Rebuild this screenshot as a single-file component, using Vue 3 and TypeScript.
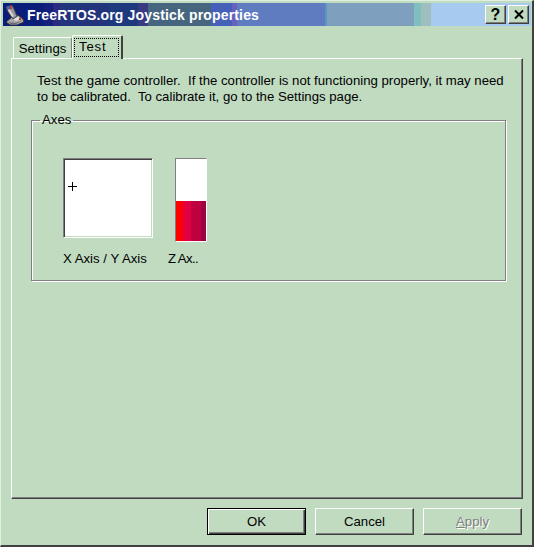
<script setup lang="ts">
interface Band {
  width: number
  color: string
}

const titleBands: Band[] = [
  { width: 41, color: '#0a1d78' },
  { width: 9, color: '#14207c' },
  { width: 7, color: '#2a2a80' },
  { width: 48, color: '#22347c' },
  { width: 30, color: '#1e3a7e' },
  { width: 10, color: '#3a3a82' },
  { width: 63, color: '#45667e' },
  { width: 21, color: '#4460b8' },
  { width: 5, color: '#6a60c0' },
  { width: 88, color: '#5f7cc0' },
  { width: 2, color: '#5a96c0' },
  { width: 87, color: '#7f9fbf' },
  { width: 7, color: '#7fbfbf' },
  { width: 10, color: '#9fbfbf' },
]

const zBands: Band[] = [
  { width: 7, color: '#ff0000' },
  { width: 8, color: '#df0040' },
  { width: 10, color: '#bf0040' },
  { width: 5, color: '#9f0040' },
]
</script>

<template>
  <div class="dialog">
    <header class="titlebar">
      <div class="bands">
        <span
          v-for="(band, i) in titleBands"
          :key="i"
          :style="{ width: band.width + 'px', background: band.color }"
        ></span>
      </div>
      <svg class="app-icon" width="22" height="22" viewBox="0 0 22 22">
        <path d="M3 18l6-5 6-2 5 4 1 3-7 3H7z" fill="#a8a8a8" stroke="#303038" stroke-width="1" />
        <path d="M10 15l5-2 3 2-5 2z" fill="#e0e0e0" />
        <path d="M5 18l7 1 7-2-6 3H8z" fill="#686870" />
        <path d="M3 3l6-2 2 4 3 7-4 3-5-7z" fill="#98989f" stroke="#404048" stroke-width="1" />
        <path d="M5 6l2 0 4 6-2 1z" fill="#d8d8d8" />
        <path d="M4 2h3v3H4z" fill="#4060c0" />
        <path d="M7 2h2v3H7z" fill="#c83838" />
        <path d="M16 14h2v2h-2z" fill="#c03030" />
      </svg>
      <span class="title">FreeRTOS.org Joystick properties</span>
      <div class="caption-buttons">
        <button class="caption-btn help">?</button>
        <button class="caption-btn close">
          <svg width="12" height="11" viewBox="0 0 12 11">
            <path d="M2 1.5l8 8M10 1.5l-8 8" stroke="#000" stroke-width="2" fill="none" />
          </svg>
        </button>
      </div>
    </header>

    <div class="content">
      <div class="tabs">
        <div class="tab">Settings</div>
        <div class="tab active"><span class="focus">Test</span></div>
      </div>

      <section class="panel">
        <p class="intro">
          Test the game controller.&nbsp; If the controller is not functioning properly, it may need<br />
          to be calibrated.&nbsp; To calibrate it, go to the Settings page.
        </p>

        <fieldset class="axes">
          <legend>Axes</legend>
          <div class="axis-row">
            <div class="axis xy">
              <div class="xy-box">
                <svg class="crosshair" width="9" height="9" viewBox="0 0 9 9">
                  <path d="M4.5 0v9M0 4.5h9" stroke="#000" stroke-width="1" />
                </svg>
              </div>
              <div class="axis-label">X Axis / Y Axis</div>
            </div>
            <div class="axis z">
              <div class="z-box">
                <div class="z-fill">
                  <span
                    v-for="band in zBands"
                    :key="band.color"
                    :style="{ width: band.width + 'px', background: band.color }"
                  ></span>
                </div>
              </div>
              <div class="axis-label z-label">Z Ax..</div>
            </div>
          </div>
        </fieldset>
      </section>

      <footer class="actions">
        <button class="btn default">OK</button>
        <button class="btn">Cancel</button>
        <button class="btn disabled" disabled><span><u>A</u>pply</span></button>
      </footer>
    </div>
  </div>
</template>

<style>
html,
body {
  margin: 0;
  background: #c1dbc1;
}
</style>

<style scoped>
.dialog {
  width: 534px;
  height: 547px;
  box-sizing: border-box;
  background: #c1dbc1;
  border-top: 1px solid #e0f0e0;
  border-left: 1px solid #e0f0e0;
  border-right: 2px solid #404040;
  border-bottom: 2px solid #404040;
  padding: 2px 1px 0 2px;
  font-family: "Liberation Sans", Arial, sans-serif;
  font-size: 13.2px;
  color: #000;
  overflow: hidden;
}

.titlebar {
  position: relative;
  height: 23px;
  display: flex;
  align-items: center;
  background: #a6caf0;
}

.bands {
  position: absolute;
  inset: 0;
  display: flex;
}

.bands span {
  display: block;
  height: 100%;
}

.app-icon {
  position: relative;
  flex: none;
}

.title {
  position: relative;
  margin-left: 2px;
  color: #fff;
  font-size: 14px;
  font-weight: bold;
  letter-spacing: 0.16px;
  white-space: nowrap;
}

.caption-buttons {
  position: relative;
  margin-left: auto;
  margin-right: 2px;
  display: flex;
  gap: 2px;
}

.caption-btn {
  width: 21px;
  height: 19px;
  padding: 0;
  display: flex;
  align-items: center;
  justify-content: center;
  background: #c1dbc1;
  border: 1px solid;
  border-color: #fff #404040 #404040 #fff;
  box-shadow: inset -1px -1px 0 #808080;
  font-family: "Liberation Sans", Arial, sans-serif;
  font-size: 16px;
  font-weight: bold;
  line-height: 1;
  color: #000;
}

.content {
  padding: 9px 8px 0 8px;
}

.tabs {
  display: flex;
  align-items: flex-end;
  height: 23px;
  padding-left: 2px;
  position: relative;
  z-index: 1;
}

.tab {
  width: 59px;
  height: 21px;
  box-sizing: border-box;
  border: 1px solid #fff;
  border-right: 1px solid #808080;
  border-bottom: none;
  border-radius: 2px 2px 0 0;
  background: #c1dbc1;
  text-align: center;
  line-height: 21px;
}

.tab.active {
  width: 51px;
  height: 24px;
  margin-bottom: -1px;
  border-right: 2px solid #404040;
  padding: 2px 2px 0 1px;
  text-align: left;
  line-height: 17px;
}

.focus {
  display: block;
  height: 19px;
  padding-left: 5px;
  letter-spacing: 0.8px;
  outline: 1px dotted #000;
  outline-offset: -1px;
}

.panel {
  box-sizing: border-box;
  height: 441px;
  padding: 14px 17px 0 25px;
  border: 1px solid;
  border-color: #fff #404040 #404040 #fff;
  box-shadow: inset -1px -1px 0 #808080;
}

.intro {
  margin: 0;
  line-height: 16px;
  white-space: nowrap;
}

.axes {
  margin: 7px 0 0 -6px;
  padding: 0;
  box-sizing: border-box;
  width: 475px;
  height: 169px;
  border: 1px solid #808080;
  box-shadow: 1px 1px 0 #fff, inset 1px 1px 0 #fff;
  min-width: 0;
}

.axes legend {
  margin-left: 8px;
  padding: 0 2px;
  line-height: 16px;
}

.axis-row {
  display: flex;
  padding: 30px 0 0 31px;
  gap: 22px;
}

.axis-label {
  white-space: nowrap;
  line-height: 16px;
}

.xy-box {
  position: relative;
  box-sizing: border-box;
  width: 90px;
  height: 80px;
  background: #fff;
  border: 1px solid;
  border-color: #808080 #fff #fff #808080;
  box-shadow: inset 1px 1px 0 #404040, inset -1px -1px 0 #c1dbc1;
}

.crosshair {
  position: absolute;
  left: 4px;
  top: 23px;
}

.xy .axis-label {
  margin-top: 13px;
}

.z-box {
  box-sizing: border-box;
  width: 32px;
  height: 84px;
  background: #fff;
  border: 1px solid;
  border-color: #808080 #fff #fff #808080;
  display: flex;
  flex-direction: column;
  justify-content: flex-end;
}

.z-fill {
  height: 40px;
  display: flex;
}

.z-fill span {
  display: block;
  height: 100%;
}

.z-label {
  margin-top: 9px;
  margin-left: -7px;
  letter-spacing: -0.6px;
}

.actions {
  display: flex;
  justify-content: flex-end;
  gap: 9px;
  margin-top: 9px;
  padding-right: 1px;
}

.btn {
  width: 99px;
  height: 27px;
  padding: 0;
  background: #c1dbc1;
  border: 1px solid;
  border-color: #fff #404040 #404040 #fff;
  box-shadow: inset -1px -1px 0 #808080;
  font-family: "Liberation Sans", Arial, sans-serif;
  font-size: 13.2px;
  color: #000;
}

.btn.default {
  outline: 1px solid #000;
  outline-offset: -1px;
  border-color: #000;
  box-shadow: inset 1px 1px 0 #fff, inset -1px -1px 0 #404040, inset -2px -2px 0 #808080;
}

.btn.disabled span {
  color: #808080;
  text-shadow: 1px 1px 0 #fff;
}
</style>
